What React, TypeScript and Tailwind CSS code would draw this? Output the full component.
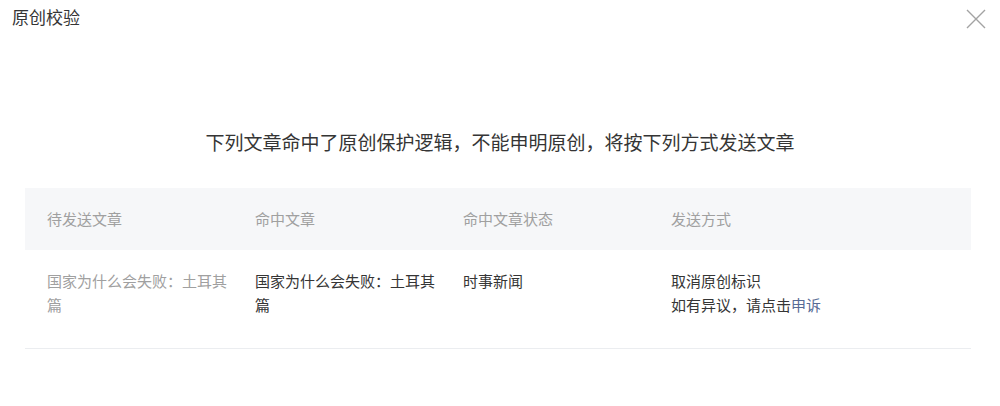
const font = {
  fontFamily: '"Noto Sans CJK SC", "Noto Sans", sans-serif',
};

const columns = ["待发送文章", "命中文章", "命中文章状态", "发送方式"];

export default function App() {
  return (
    <div className="h-[406px] w-[1000px] bg-white text-[#353535]" style={font}>
      <div className="flex items-center justify-between pl-[12px] pr-[14px] pt-[5px]">
        <h1 className="text-[17px] leading-6 font-normal">原创校验</h1>
        <button className="mt-[3px] text-[#a3a3a3]" aria-label="关闭">
          <svg width="20" height="20" viewBox="0 0 20 20" fill="none">
            <path d="M1 1L19 19M19 1L1 19" stroke="currentColor" strokeWidth="1.4" />
          </svg>
        </button>
      </div>

      <p className="mt-[101px] text-center text-[19px] leading-6">
        下列文章命中了原创保护逻辑，不能申明原创，将按下列方式发送文章
      </p>

      <div className="ml-[25px] mt-[34px] w-[946px] text-[15px]">
        <div className="grid h-[62px] grid-cols-[208px_208px_208px_1fr] items-center bg-[#f6f7f9] text-[#a0a0a0]">
          {columns.map((c) => (
            <div key={c} className="pl-[22px]">
              {c}
            </div>
          ))}
        </div>
        <div className="grid grid-cols-[208px_208px_208px_1fr] border-b border-[#ebedf0] pt-[19px] pb-[31px] leading-6">
          <div className="pl-[22px] pr-[4px] text-[#a0a0a0]">国家为什么会失败：土耳其篇</div>
          <div className="pl-[22px] pr-[4px]">国家为什么会失败：土耳其篇</div>
          <div className="pl-[22px] pr-[4px]">时事新闻</div>
          <div className="pl-[22px]">
            <div>取消原创标识</div>
            <div>
              如有异议，请点击<span className="text-[#576b95]">申诉</span>
            </div>
          </div>
        </div>
      </div>
    </div>
  );
}
